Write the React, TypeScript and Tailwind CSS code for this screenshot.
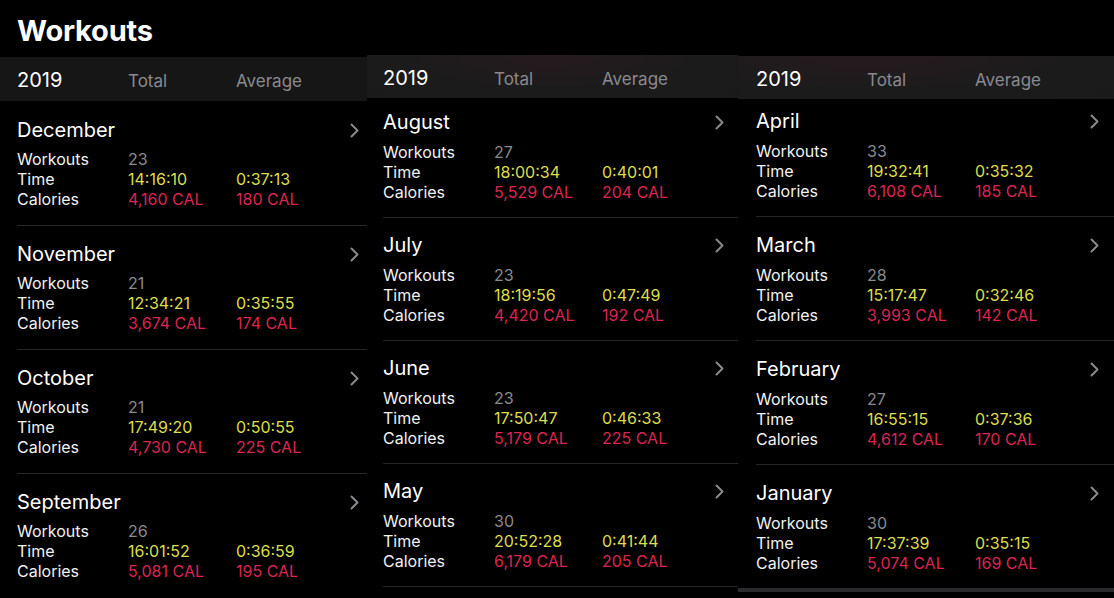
import React from "react";

type Month = { name: string; workouts: string; time: string; avgTime: string; cal: string; avgCal: string };

const col1: Month[] = [
  { name: "December", workouts: "23", time: "14:16:10", avgTime: "0:37:13", cal: "4,160 CAL", avgCal: "180 CAL" },
  { name: "November", workouts: "21", time: "12:34:21", avgTime: "0:35:55", cal: "3,674 CAL", avgCal: "174 CAL" },
  { name: "October", workouts: "21", time: "17:49:20", avgTime: "0:50:55", cal: "4,730 CAL", avgCal: "225 CAL" },
  { name: "September", workouts: "26", time: "16:01:52", avgTime: "0:36:59", cal: "5,081 CAL", avgCal: "195 CAL" },
];
const col2: Month[] = [
  { name: "August", workouts: "27", time: "18:00:34", avgTime: "0:40:01", cal: "5,529 CAL", avgCal: "204 CAL" },
  { name: "July", workouts: "23", time: "18:19:56", avgTime: "0:47:49", cal: "4,420 CAL", avgCal: "192 CAL" },
  { name: "June", workouts: "23", time: "17:50:47", avgTime: "0:46:33", cal: "5,179 CAL", avgCal: "225 CAL" },
  { name: "May", workouts: "30", time: "20:52:28", avgTime: "0:41:44", cal: "6,179 CAL", avgCal: "205 CAL" },
];
const col3: Month[] = [
  { name: "April", workouts: "33", time: "19:32:41", avgTime: "0:35:32", cal: "6,108 CAL", avgCal: "185 CAL" },
  { name: "March", workouts: "28", time: "15:17:47", avgTime: "0:32:46", cal: "3,993 CAL", avgCal: "142 CAL" },
  { name: "February", workouts: "27", time: "16:55:15", avgTime: "0:37:36", cal: "4,612 CAL", avgCal: "170 CAL" },
  { name: "January", workouts: "30", time: "17:37:39", avgTime: "0:35:15", cal: "5,074 CAL", avgCal: "169 CAL" },
];

function Chevron() {
  return (
    <svg width="9" height="15" viewBox="0 0 9 15" fill="none">
      <path d="M1.5 1.5 L7.5 7.5 L1.5 13.5" stroke="#8a8a8e" strokeWidth="2" strokeLinecap="round" strokeLinejoin="round" />
    </svg>
  );
}

function Item({ m, pt, gap, pb, pr, border }: { m: Month; pt: string; gap: string; pb: string; pr: string; border: boolean }) {
  return (
    <div className={`${pt} ${pb} ${border ? "border-b border-[#262628]" : ""}`}>
      <div className={`flex items-center justify-between h-[24px] ${pr}`}>
        <span className="text-[20px] leading-[24px] text-white">{m.name}</span>
        <Chevron />
      </div>
      <div className={`${gap} text-[16px] leading-[20px]`}>
        <div className="flex">
          <span className="w-[111px] text-[#f2f2f2]">Workouts</span>
          <span className="text-[#8a8a8e]">{m.workouts}</span>
        </div>
        <div className="flex">
          <span className="w-[111px] text-[#f2f2f2]">Time</span>
          <span className="w-[108px] text-[#dede4c]">{m.time}</span>
          <span className="text-[#dede4c]">{m.avgTime}</span>
        </div>
        <div className="flex">
          <span className="w-[111px] text-[#f2f2f2]">Calories</span>
          <span className="w-[108px] text-[#dc2552]">{m.cal}</span>
          <span className="text-[#dc2552]">{m.avgCal}</span>
        </div>
      </div>
    </div>
  );
}

function Bar({ pl, h, bg, pt }: { pl: string; h: string; bg: string; pt: string }) {
  return (
    <div className={`${h} ${bg} ${pl} ${pt} flex items-center`}>
      <span className="w-[111px] text-[20px] leading-[24px] text-white">2019</span>
      <span className="w-[108px] text-[17px] leading-[24px] text-[#8a8a8e] mt-[2px]">Total</span>
      <span className="text-[17px] leading-[24px] text-[#8a8a8e] mt-[2px]">Average</span>
    </div>
  );
}

export default function App() {
  return (
    <div className="w-[1114px] h-[598px] bg-black overflow-hidden flex text-white" style={{ fontFamily: "Inter, 'Noto Sans', sans-serif" }}>
      {/* Column 1 */}
      <div className="w-[367px] flex flex-col shrink-0">
        <div className="h-[57px] pl-[17px] pt-[3px] flex items-center">
          <h1 className="text-[29px] font-bold leading-none tracking-[-0.2px]">Workouts</h1>
        </div>
        <Bar pl="pl-[17px]" pt="pt-[2px]" h="h-[44px]" bg="bg-[#161616]" />
        <div className="pl-[17px]">
          {col1.map((m, i) => (
            <Item key={m.name} m={m} pt={i === 0 ? "pt-[17px]" : "pt-[16px]"} gap="mt-[7px]" pb="pb-[16px]" pr="pr-[8px]" border={i < 3} />
          ))}
        </div>
      </div>
      {/* Column 2 */}
      <div className="w-[371px] flex flex-col shrink-0">
        <div className="h-[55px]" />
        <Bar pl="pl-[16px]" pt="pt-[2px]" h="h-[43px]" bg="bg-[radial-gradient(ellipse_at_50%_0%,#261b1e_0%,#1c1b1c_55%,#1a1a1a_100%)]" />
        <div className="pl-[16px]">
          {col2.map((m, i) => (
            <Item key={m.name} m={m} pt={i === 0 ? "pt-[12px]" : "pt-[15px]"} gap="mt-[8px]" pb="pb-[15px]" pr="pr-[14px]" border={true} />
          ))}
        </div>
      </div>
      {/* Column 3 */}
      <div className="flex-1 flex flex-col">
        <div className="h-[56px]" />
        <Bar pl="pl-[18px]" pt="pt-[2px]" h="h-[43px]" bg="bg-[radial-gradient(ellipse_at_35%_0%,#261b1e_0%,#1c1b1c_55%,#1a1a1a_100%)]" />
        <div className="pl-[18px]">
          {col3.map((m, i) => (
            <Item key={m.name} m={m} pt={i === 0 ? "pt-[10px]" : "pt-[16px]"} gap="mt-[8px]" pb="pb-[15px]" pr="pr-[15px]" border={i < 3} />
          ))}
        </div>
        <div className="h-[4px] bg-[#2a2a2c]" />
      </div>
    </div>
  );
}
